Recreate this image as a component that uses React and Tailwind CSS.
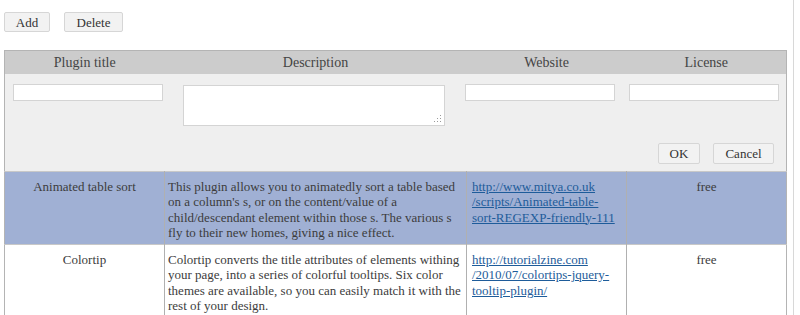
import React from 'react';

const rows = [
    {
        title: 'Animated table sort',
        desc: "This plugin allows you to animatedly sort a table based on a column's s, or on the content/value of a child/descendant element within those s. The various s fly to their new homes, giving a nice effect.",
        url: ['http://www.mitya.co.uk', '/scripts/Animated-table-', 'sort-REGEXP-friendly-111'],
        license: 'free',
        selected: true,
    },
    {
        title: 'Colortip',
        desc: 'Colortip converts the title attributes of elements withing your page, into a series of colorful tooltips. Six color themes are available, so you can easily match it with the rest of your design.',
        url: ['http://tutorialzine.com', '/2010/07/colortips-jquery-', 'tooltip-plugin/'],
        license: 'free',
        selected: false,
    },
];

export default function App() {
    return (
        <div className="w-[794px] h-[315px] overflow-hidden border-r border-[#d8d8d8] bg-white text-[#3c3c3c] font-['Liberation_Serif',Georgia,serif]">
            {/* toolbar */}
            <div className="flex gap-[14px] pl-[4px] pt-[12px] h-[50px]">
                <button className="h-[20px] w-[46px] text-[13px] leading-none bg-[#f2f2f2] border border-[#d6d6d6] rounded-[2px] text-[#333]">Add</button>
                <button className="h-[20px] w-[59px] text-[13px] leading-none bg-[#f2f2f2] border border-[#d6d6d6] rounded-[2px] text-[#333]">Delete</button>
            </div>

            <table className="ml-[4px] w-[782px] table-fixed border-collapse border border-[#b4b4b4] text-[13px]">
                <colgroup>
                    <col className="w-[160px]" />
                    <col className="w-[302px]" />
                    <col className="w-[160px]" />
                    <col className="w-[160px]" />
                </colgroup>
                <thead>
                    <tr className="bg-[#cccccc] h-[23px]">
                        <th className="font-normal text-[14px] text-[#444]">Plugin title</th>
                        <th className="font-normal text-[14px] text-[#444]">Description</th>
                        <th className="font-normal text-[14px] text-[#444]">Website</th>
                        <th className="font-normal text-[14px] text-[#444]">License</th>
                    </tr>
                </thead>
                <tbody>
                    {/* filter / edit row */}
                    <tr className="bg-[#efefef] border-b border-[#c8c8c8]">
                        <td colSpan={4} className="p-0">
                            <div className="flex items-start pt-[10px] h-[97px] relative">
                                <input className="ml-[8px] w-[150px] h-[17px] bg-white border border-[#d4d4d4]" />
                                <div className="relative ml-[20px] mt-[1px]">
                                    <textarea className="block w-[262px] h-[41px] bg-white border border-[#d4d4d4] resize-none" />
                                    <svg className="absolute right-[3px] bottom-[3px]" width="8" height="8" viewBox="0 0 8 8">
                                        <g fill="#9a9a9a">
                                            <rect x="6" y="0" width="1" height="1" />
                                            <rect x="3" y="3" width="1" height="1" />
                                            <rect x="6" y="3" width="1" height="1" />
                                            <rect x="0" y="6" width="1" height="1" />
                                            <rect x="3" y="6" width="1" height="1" />
                                            <rect x="6" y="6" width="1" height="1" />
                                        </g>
                                    </svg>
                                </div>
                                <input className="ml-[20px] w-[150px] h-[17px] bg-white border border-[#d4d4d4]" />
                                <input className="ml-[14px] w-[150px] h-[17px] bg-white border border-[#d4d4d4]" />
                                <div className="absolute right-[12px] bottom-[7px] flex gap-[13px]">
                                    <button className="h-[21px] w-[42px] text-[13px] leading-none bg-[#f2f2f2] border border-[#d6d6d6] rounded-[2px] text-[#333]">OK</button>
                                    <button className="h-[21px] w-[61px] text-[13px] leading-none bg-[#f2f2f2] border border-[#d6d6d6] rounded-[2px] text-[#333]">Cancel</button>
                                </div>
                            </div>
                        </td>
                    </tr>
                    {rows.map(r => (
                        <tr key={r.title} className={`${r.selected ? 'bg-[#a0b0d4]' : 'bg-white'} border-b border-[#c8c8c8] align-top leading-[15.5px]`}>
                            <td className="text-center pt-[7px] pb-[3px] border-r border-[#b0b0b0]">{r.title}</td>
                            <td className="pl-[3px] pr-[4px] pt-[7px] pb-[3px] border-r border-[#b0b0b0]">{r.desc}</td>
                            <td className="pl-[5px] pt-[7px] border-r border-[#b0b0b0]">
                                <a href="#" className="text-[#1e5c9a] underline">
                                    {r.url.map((u, i) => <div key={i}>{u}</div>)}
                                </a>
                            </td>
                            <td className="text-center pt-[7px]">{r.license}</td>
                        </tr>
                    ))}
                </tbody>
            </table>
        </div>
    );
}
